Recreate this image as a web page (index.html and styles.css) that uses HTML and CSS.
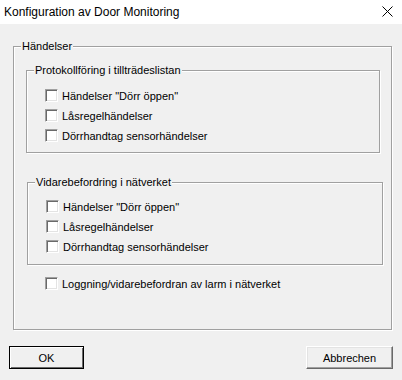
FILE: index.html
```html
<!DOCTYPE html>
<html lang="sv">
<head>
	<meta charset="UTF-8">
	<title>Konfiguration av Door Monitoring</title>
	<link rel="stylesheet" href="styles.css">
</head>
<body>
	<div class="dialog">
		<div class="titlebar">
			<span class="title">Konfiguration av Door Monitoring</span>
			<span class="close">
				<svg width="11" height="11" viewBox="0 0 11 11"><path d="M0.5 0.5 L10.5 10.5 M10.5 0.5 L0.5 10.5" stroke="#000" stroke-width="1" fill="none"/></svg>
			</span>
		</div>

		<div class="group outer">
			<div class="group-title">Händelser</div>

			<div class="group inner first">
				<div class="group-title">Protokollföring i tillträdeslistan</div>
				<label class="check"><span class="box"></span>Händelser "Dörr öppen"</label>
				<label class="check"><span class="box"></span>Låsregelhändelser</label>
				<label class="check"><span class="box"></span>Dörrhandtag sensorhändelser</label>
			</div>

			<div class="group inner second">
				<div class="group-title">Vidarebefordring i nätverket</div>
				<label class="check"><span class="box"></span>Händelser "Dörr öppen"</label>
				<label class="check"><span class="box"></span>Låsregelhändelser</label>
				<label class="check"><span class="box"></span>Dörrhandtag sensorhändelser</label>
			</div>

			<label class="check alarm"><span class="box"></span>Loggning/vidarebefordran av larm i nätverket</label>
		</div>

		<div class="buttons">
			<button class="btn default">OK</button>
			<button class="btn cancel">Abbrechen</button>
		</div>
	</div>
</body>
</html>
```

FILE: styles.css
```css
*{margin: 0;padding: 0;box-sizing: border-box;}
body{width: 402px;height: 380px;background: #f0f0f0;font-family: "Liberation Sans", Arial, sans-serif;font-size: 11px;color: #000;overflow: hidden;}

.titlebar{height: 24px;background: #fff;display: flex;align-items: center;justify-content: space-between;padding: 0 9px 0 4px;}
.title{font-family: "Liberation Sans", Arial, sans-serif;font-size: 12px;line-height: 16px;}
.close{display: flex;width: 11px;height: 11px;margin-top: -1px;}

.group{border: 1px solid #a0a0a0;box-shadow: 1px 1px 0 #fff, inset 1px 1px 0 #fff;}
.group-title{display: table;margin: -7px 0 0 7px;padding: 0 1px;height: 13px;line-height: 13px;background: #f0f0f0;}

.outer{margin: 22px 0 0 13px;width: 379px;height: 284px;}
.inner{height: 83px;}
.inner.first{margin: 17px 0 0 12px;width: 354px;}
.inner.second{margin: 29px 0 0 13px;width: 356px;}

.check{display: flex;align-items: center;height: 13px;margin-top: 7px;white-space: nowrap;}
.inner .check{margin-left: 18px;}
.inner .check:nth-child(2){margin-top: 12px;}
.second .check:nth-child(2){margin-top: 11px;}
.box{width: 13px;height: 13px;margin-right: 4px;background: #fff;border: 1px solid;border-color: #a0a0a0 #fff #fff #a0a0a0;box-shadow: inset 1px 1px 0 #696969, inset -1px -1px 0 #e3e3e3;flex: none;}
.alarm{margin: 12px 0 0 31px;}

.buttons{display: flex;justify-content: space-between;padding: 0 9px;margin-top: 16px;}
.btn{height: 23px;font-family: "Liberation Sans", Arial, sans-serif;font-size: 11px;background: #f0f0f0;color: #000;}
.btn.default{width: 75px;border: 1px solid #000;box-shadow: inset 1px 1px 0 #fff, inset -1px -1px 0 #696969;}
.btn.cancel{width: 87px;border: 1px solid;border-color: #fff #696969 #696969 #fff;box-shadow: inset -1px -1px 0 #a0a0a0, inset 1px 1px 0 #e3e3e3;}
```
